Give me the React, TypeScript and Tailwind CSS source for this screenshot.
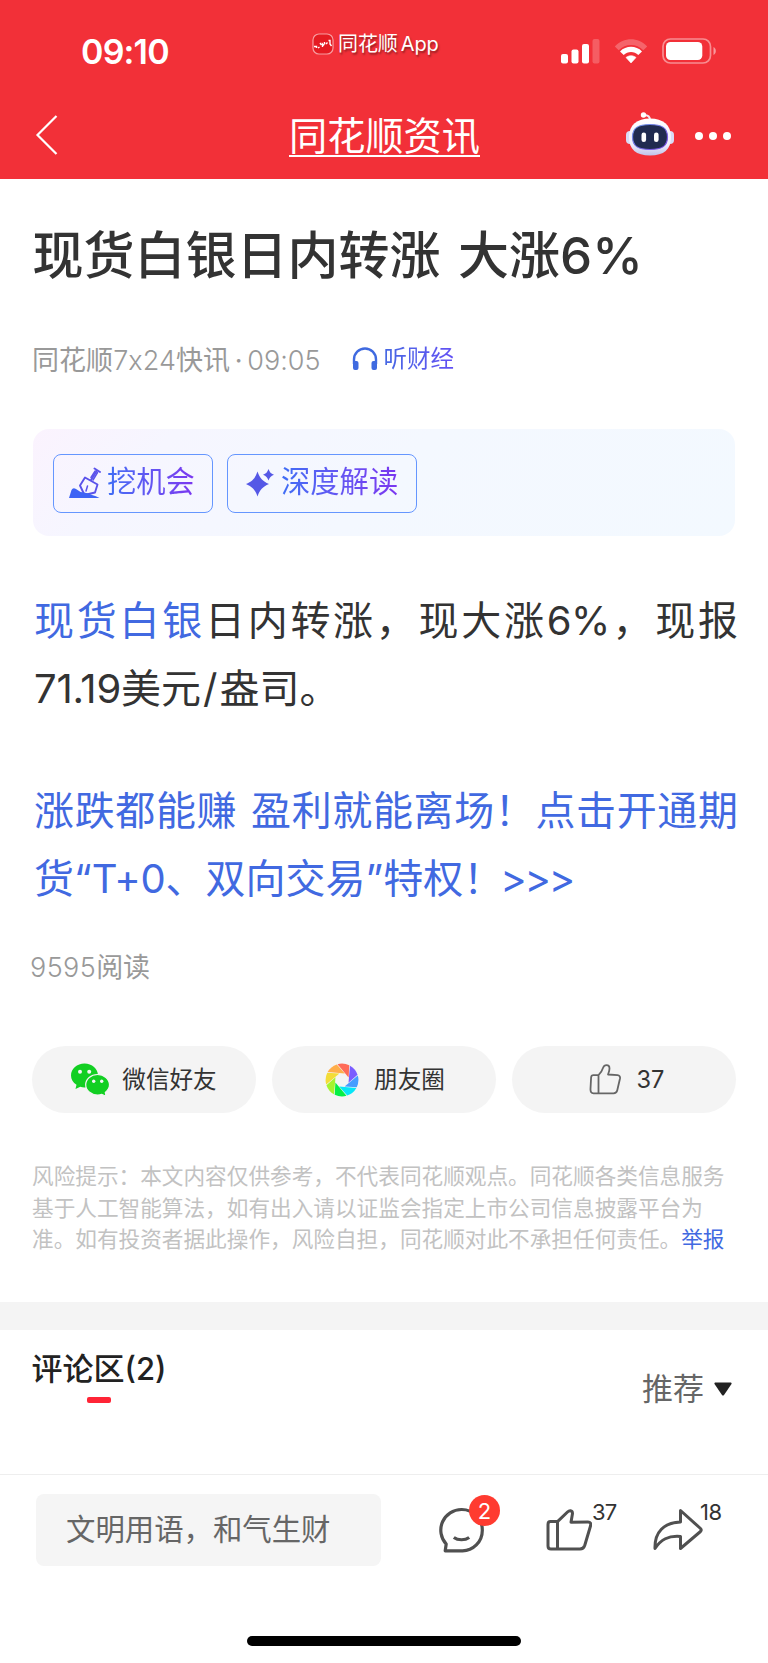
import type { ReactNode } from "react";

const petals = ["#ff6b57", "#7a5cff", "#459dff", "#06e6f7", "#05ef45", "#a6f32f", "#f3dc37", "#ffae4a"];

const SignalIcon = () => (
  <svg className="w-[39px] h-[26px]" viewBox="0 0 39 26" fill="#fff">
    <rect x="0" y="16" width="7" height="9.5" rx="2" />
    <rect x="10.5" y="11.5" width="7" height="14" rx="2" />
    <rect x="21" y="6" width="7" height="19.500" rx="2" />
    <rect x="31.500" y="1" width="7" height="24.500" rx="2" opacity=".22" />
  </svg>
);

const WifiIcon = () => (
  <svg className="w-[34px] h-[26px]" viewBox="0 0 34 26" fill="#fff">
    <path d="M.8 8.500C10 -1.200 24 -1.200 33.200 8.500L29.300 12.300C22.500 5.200 11.500 5.200 4.700 12.300Z" opacity=".25" />
    <path d="M6 13.500C12 7.300 22 7.300 28 13.500L24.300 17C20.300 12.900 13.700 12.900 9.700 17Z" />
    <path d="M12 19.500C14.800 17.200 19.200 17.200 22 19.500L17 25Z" stroke="#fff" strokeWidth=".6" strokeLinejoin="round" />
  </svg>
);

const BatteryIcon = () => (
  <svg className="w-[55px] h-[26px]" viewBox="0 0 55 26">
    <rect x="1" y="1" width="47.500" height="24" rx="7.500" fill="none" stroke="#fff" strokeOpacity=".45" strokeWidth="1.700" />
    <rect x="4" y="4" width="36.300" height="18" rx="4.500" fill="#fff" />
    <path d="M51.500 9C54.600 10.500 54.600 15.500 51.500 17Z" fill="#fff" opacity=".5" />
  </svg>
);

const AppLogo = () => (
  <svg className="w-[22px] h-[22px]" viewBox="0 0 22 22">
    <rect x="1" y="1" width="20" height="20" rx="6" fill="#e51b22" stroke="#fff" strokeOpacity=".55" strokeWidth="1.200" />
    <path d="M2 13.500H4.500V15M6 15L7.500 14M8 10L9.500 12M10.500 14V11L12 12.500M12.500 9V11.500M14 11L15.500 9.500M16.500 7.500H18V11L19.500 13" fill="none" stroke="#fff" strokeWidth="1.400" />
  </svg>
);

const RobotIcon = () => (
  <svg className="w-[48px] h-[46px]" viewBox="0 0 48 46">
    <defs>
      <linearGradient id="head" x1="0" y1="0" x2="0" y2="1">
        <stop offset="0" stopColor="#fff" />
        <stop offset=".7" stopColor="#f0eefb" />
        <stop offset="1" stopColor="#bfc2ea" />
      </linearGradient>
      <linearGradient id="rim" x1="0" y1="0" x2="1" y2="1">
        <stop offset="0" stopColor="#6e9bea" />
        <stop offset="1" stopColor="#7b45e0" />
      </linearGradient>
    </defs>
    <path d="M18 4C22 4 24 5.500 24 9" fill="none" stroke="#f4e9f4" strokeWidth="2" />
    <circle cx="17.500" cy="4" r="2.700" fill="#fff" />
    <rect x="0" y="20" width="8" height="13" rx="4" fill="#d9dbf5" />
    <rect x="40" y="20" width="8" height="13" rx="4" fill="#d9dbf5" />
    <path d="M24 7.500C37 7.500 45 14 45 26C45 38.500 38 44.500 24 44.500S3 38.500 3 26C3 14 11 7.500 24 7.500Z" fill="url(#head)" />
    <path d="M24 13.500C36 13.500 41.500 17 41.500 26S36 38.500 24 38.500S6.500 35 6.500 26S12 13.500 24 13.500Z" fill="#202b50" stroke="url(#rim)" strokeWidth="1.200" />
    <rect x="15.500" y="21.500" width="4.600" height="9.500" rx="2.300" fill="#fff" />
    <rect x="28" y="21.500" width="4.600" height="9.500" rx="2.300" fill="#fff" />
  </svg>
);

const HeadphoneIcon = () => (
  <svg className="w-[26px] h-[24px]" viewBox="0 0 26 24">
    <path d="M2 17V12.500A11 11 0 0 1 24 12.500V17" fill="none" stroke="#3f6ae0" strokeWidth="2.400" />
    <path d="M1 14H4.500Q6.500 14 6.500 16V21Q6.500 23 4.500 23H3Q1 23 1 21ZM25 14H21.500Q19.500 14 19.500 16V21Q19.500 23 21.500 23H23Q25 23 25 21Z" fill="#3f6ae0" />
  </svg>
);

const ShovelIcon = () => (
  <svg className="w-[32px] h-[32px]" viewBox="0 0 32 32">
    <g fill="none" stroke="#5a52ea" strokeWidth="1.900" strokeLinejoin="round" strokeLinecap="round">
      <path d="M25.500 1.500L31 5M28 3.500L22 13" />
      <path d="M26.200 4L22 10.500M28.500 5.500L24 13" strokeWidth="1.500" />
      <path d="M16 10.500L28.500 17.500L26 25.500L15.500 28L11 18.500Z" />
      <path d="M18.500 19L17 24" strokeWidth="1.500" />
    </g>
    <path d="M0 31L2.500 23Q4 20 7 22Q11 25.500 15 25.500Q20 26 23 28Q27 29 30.500 31Z" fill="#3d63f5" />
  </svg>
);

const SparkleIcon = () => (
  <svg className="w-[28px] h-[28px]" viewBox="0 0 28 28" fill="#5558e6">
    <path d="M11.500 2.500C14 9.500 16.500 12 23 15C16.500 18 14 20.500 11.500 27.500C9 20.500 6.500 18 0 15C6.500 12 9 9.500 11.500 2.500Z" />
    <path d="M22.500 0C23.700 3.300 24.800 4.500 28 5.700C24.800 7 23.700 8.200 22.500 11.500C21.300 8.200 20.200 7 17 5.700C20.200 4.500 21.300 3.300 22.500 0Z" />
  </svg>
);

const WechatIcon = () => (
  <svg className="w-[39px] h-[34px]" viewBox="0 0 39 34">
    <path d="M13.500 .5C21 .5 27 5.500 27 12.500S21 24.500 13.500 24.500C11.800 24.500 10.500 24.200 9.300 23.800L4.500 26L5.500 21.800C2 19.500 0 16.300 0 12.500C0 5.500 6 .5 13.500 .5Z" fill="#12cf22" />
    <path d="M26.500 11.500C33 11.500 38.500 16 38.500 21.800C38.500 25 36.800 27.500 34.300 29.400L35 33.200L30.800 31.400C29.500 31.800 28 32 26.500 32C20 32 14.700 27.500 14.700 21.800S20 11.500 26.500 11.500Z" fill="#12cf22" stroke="#f4f4f4" strokeWidth="1.200" />
    <g fill="#f4f4f4">
      <circle cx="9" cy="8.700" r="2" />
      <circle cx="18.200" cy="8.700" r="2" />
      <circle cx="22.700" cy="18.300" r="1.700" />
      <circle cx="30.700" cy="18.300" r="1.700" />
    </g>
  </svg>
);

const MomentsIcon = () => (
  <svg className="w-[34px] h-[34px]" viewBox="-17 -17 34 34">
    {petals.map((color, i) => (
      <path
        key={color}
        d="M-4.500 -15.800A16.400 16.400 0 0 1 7.300 -14.700L6.600 -2.600Z"
        fill={color}
        transform={`rotate(${i * 45})`}
      />
    ))}
    <circle r="5.800" fill="#f4f4f4" />
  </svg>
);

const ThumbSmallIcon = () => (
  <svg className="w-[32px] h-[32px]" viewBox="0 0 32 32" fill="none" stroke="#666" strokeWidth="1.800" strokeLinejoin="round">
    <path d="M9.500 11.200H4.500Q2.300 11.200 2.100 13.500L1.500 25Q1.300 29.300 4.500 29.300H24.500Q27.500 29.300 28.200 26.500L31 14.500Q31.500 11.500 28.500 11.200L19 10.500Q20.500 7 20.500 4.500Q20.500 1.200 17.500 1.200Q15 1.200 14.200 3.500Q12.500 8.500 9.500 11.200ZM9.500 11.200V29.300" />
  </svg>
);

const CommentIcon = () => (
  <svg className="w-[46px] h-[46px]" viewBox="0 0 46 46" fill="none" stroke="#505050" strokeWidth="3.200" strokeLinejoin="round">
    <path d="M22.500 2.500A20.500 20.500 0 0 1 43.300 23.500C43.300 35 34 43.800 23.500 43.800H6.200L7.200 37A20.600 20.600 0 0 1 22.500 2.500Z" />
    <path d="M14.800 30.500C19 33.500 26 33.500 30.200 30.500" />
  </svg>
);

const ThumbIcon = () => (
  <svg className="w-[46px] h-[42px]" viewBox="0 0 46 42" fill="none" stroke="#505050" strokeWidth="3" strokeLinejoin="round">
    <path d="M11.500 12.600H4.500Q2 12.600 2 15.500V37Q2 40 5 40H34Q37.500 40 38.700 36.500L44.500 17Q45.500 13 42 13L25 13.200L26.500 4.500Q26.500 2 24.500 1.700Q23 1.500 21.500 3ZM11.500 12.600V40" />
  </svg>
);

const ShareIcon = () => (
  <svg className="w-[50px] h-[43px]" viewBox="0 0 50 43" fill="none" stroke="#505050" strokeWidth="3" strokeLinejoin="round">
    <path d="M27.500 2.500L47.500 20.500Q49 22 47.500 23.500L27.500 40.500V28.500C15 27.500 8 31.500 2 40.500C1.500 24 11 14.500 27.500 14Z" />
  </svg>
);

const ShareButton = ({ icon, children }: { icon: ReactNode; children: ReactNode }) => (
  <button className="flex-1 h-[67px] rounded-full bg-[#f4f4f4] flex items-center justify-center text-[23.600px] text-[#333]">
    {icon}
    {children}
  </button>
);

const App = () => {
  return (
    <div className="w-[768px] h-[1663px] flex flex-col bg-white overflow-hidden whitespace-nowrap font-['Inter','Noto_Sans_CJK_SC',sans-serif] text-[#333]">
      <header className="h-[179px] shrink-0 bg-[#f23038] text-white">
        <div className="h-[93px] flex items-start">
          <span className="w-[231px] pl-[81px] mt-[32px] text-[34px] leading-[40px] font-semibold tracking-[-0.8px]">09:10</span>
          <div className="w-[330px] pl-[81px] mt-[31px] flex items-center gap-[4px]">
            <AppLogo />
            <span className="text-[20px] leading-[26px] tracking-[-0.1px] [word-spacing:-2.500px] [text-shadow:1px_2px_2px_rgb(0_0_0/0.4)]">同花顺 App</span>
          </div>
          <div className="mt-[38px] flex">
            <SignalIcon />
            <span className="ml-[14px]"><WifiIcon /></span>
            <span className="ml-[14px]"><BatteryIcon /></span>
          </div>
        </div>
        <div className="h-[86px] pl-[35px] pr-[37px] flex items-center">
          <svg className="w-[24px] h-[40px] -mt-[2px]" viewBox="0 0 24 40" fill="none" stroke="#fff" strokeWidth="2.200">
            <path d="M21.500 1L2.500 20L21.500 39" />
          </svg>
          <h2 className="ml-[230px] w-[191px] h-[42px] text-[38.200px] leading-[43px] font-normal border-b-2 border-white">同花顺资讯</h2>
          <span className="ml-[146px] -mt-[5px]"><RobotIcon /></span>
          <div className="ml-[21px] flex gap-[6px]">
            <i className="size-[8px] rounded-full bg-white" />
            <i className="size-[8px] rounded-full bg-white" />
            <i className="size-[8px] rounded-full bg-white" />
          </div>
        </div>
      </header>

      <main className="h-[1123px] shrink-0 px-[32px] flex flex-col">
        <h1 className="mt-[42px] h-[70px] pl-[0.500px] text-[51px] leading-[70px] font-medium [word-spacing:4px]">现货白银日内转涨 大涨6%</h1>
        <div className="mt-[50px] h-[40px] flex items-center">
          <span className="w-[320px] text-[27px] tracking-[0.050px] text-[#999] [word-spacing:-3px]">同花顺<span className="font-light">7x24</span>快讯 · <span className="font-light">09:05</span></span>
          <span className="-mt-[4px]"><HeadphoneIcon /></span>
          <span className="ml-[5.500px] -mt-[5px] text-[23.500px] bg-gradient-to-r from-[#4668e3] to-[#6250f4] bg-clip-text text-transparent">听财经</span>
        </div>

        <div className="mt-[48px] ml-[1px] w-[702px] h-[107px] rounded-[16px] pl-[20px] flex items-center gap-[14px] text-[29.300px] bg-[linear-gradient(135deg,#fbf3fe_0%,#f6f6ff_18%,#f4f8ff_50%,#f3f9ff_100%)]">
          <button className="w-[160px] h-[59px] mt-[1px] rounded-[8px] border-[1.500px] border-[#6596ff] pl-[15px] flex items-center gap-[6px]">
            <ShovelIcon />
            <span className="-mt-[3px] bg-gradient-to-r from-[#3d6df5] to-[#7a35f0] bg-clip-text text-transparent">挖机会</span>
          </button>
          <button className="w-[190px] h-[59px] mt-[1px] rounded-[8px] border-[1.500px] border-[#6596ff] pl-[18px] flex items-center gap-[7px]">
            <SparkleIcon />
            <span className="-mt-[3px] bg-gradient-to-r from-[#3d6df5] to-[#7a35f0] bg-clip-text text-transparent">深度解读</span>
          </button>
        </div>

        <article className="mt-[51px] ml-[2px] -mr-[2px] text-[40px] leading-[68.400px]">
          <p className="h-[68px] [text-align-last:justify]"><a className="text-[#4169e1]">现货白银</a>日内转涨，现大涨<span className="tracking-[-0.5px]">6%</span>，现报</p>
          <p className="h-[68px]"><span className="tracking-[-0.200px]">71.19</span>美元<span className="px-[2px]">/</span>盎司。</p>
          <div className="mt-[54px] text-[#4169e1]">
            <p className="h-[68px] [text-align-last:justify] [word-spacing:2px]">涨跌都能赚 盈利就能离场！点击开通期</p>
            <p className="h-[68px]">货“<span className="tracking-[-0.200px]">T+0</span>、双向交易”特权！<span className="-ml-[3px] tracking-[-2.200px]">&gt;&gt;&gt;</span></p>
          </div>
        </article>

        <p className="mt-[35px] -ml-[2px] h-[40px] text-[27px] leading-[40px] text-[#999]"><span className="font-light tracking-[0.4px]">9595</span>阅读</p>

        <div className="mt-[58px] flex gap-[16px]">
          <ShareButton icon={<WechatIcon />}>
            <span className="pl-[12px]">微信好友</span>
          </ShareButton>
          <ShareButton icon={<MomentsIcon />}>
            <span className="pl-[15px] -mr-[2px]">朋友圈</span>
          </ShareButton>
          <ShareButton icon={<ThumbSmallIcon />}>
            <span className="pl-[16px] -mr-[5px]">37</span>
          </ShareButton>
        </div>

        <div className="mt-[48px] text-[21.650px] leading-[31.500px] text-[#c2c2c2]">
          <p>风险提示：本文内容仅供参考，不代表同花顺观点。同花顺各类信息服务</p>
          <p>基于人工智能算法，如有出入请以证监会指定上市公司信息披露平台为</p>
          <p>准。如有投资者据此操作，风险自担，同花顺对此不承担任何责任。<a className="text-[#4169e1]">举报</a></p>
        </div>
      </main>

      <section className="h-[172px] shrink-0 border-t-[28px] border-[#f4f4f4] px-[32px] flex justify-between">
        <div className="pt-[18px] w-[134px] flex flex-col items-center">
          <h3 className="h-[42px] text-[31px] leading-[42px] font-medium text-[#222]">评论区(2)</h3>
          <i className="mt-[7px] w-[24px] h-[6px] rounded-[2px] bg-[#ff2436]" />
        </div>
        <div className="pt-[38px] pr-[4px] h-[79px] flex items-center gap-[10px] text-[31px] leading-[40px] text-[#666]">
          <span>推荐</span>
          <svg className="w-[18px] h-[14px]" viewBox="0 0 18 14" fill="#222">
            <path d="M1 .5H17Q18 1 17.500 2L10 13Q9 14 8 13L.5 2Q0 1 1 .5Z" />
          </svg>
        </div>
      </section>

      <footer className="h-[189px] shrink-0 border-t border-[#eee]">
        <div className="pt-[19px] pl-[36px] flex items-start">
          <div className="w-[345px] h-[72px] rounded-[8px] bg-[#f5f5f5] pl-[30px] text-[29.400px] leading-[72px] text-[#666]">文明用语，和气生财</div>
          <div className="relative ml-[58px] mt-[13px]">
            <CommentIcon />
            <span className="absolute left-[30px] -top-[12px] size-[31px] rounded-full bg-[#ff3b30] text-white text-[22px] leading-[32px] text-center">2</span>
          </div>
          <div className="ml-[61px] mt-[15px]"><ThumbIcon /></div>
          <span className="-mt-[1px] w-[61px] pt-[6px] text-[22px] leading-[26px] tracking-[-0.8px]">37</span>
          <div className="mt-[14px]"><ShareIcon /></div>
          <span className="-ml-[3px] mt-[5px] text-[22px] leading-[26px] tracking-[-0.5px]">18</span>
        </div>
        <div className="mt-[70px] mx-auto w-[274px] h-[10px] rounded-full bg-black" />
      </footer>
    </div>
  );
};

export default App;
